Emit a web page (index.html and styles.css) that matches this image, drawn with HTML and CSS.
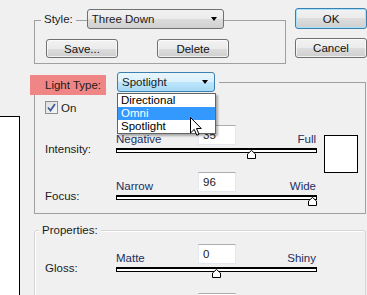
FILE: index.html
```html
<!DOCTYPE html>
<html lang="en">

<head>
  <meta charset="UTF-8">
  <meta name="viewport" content="width=device-width, initial-scale=1.0">
  <title>Lighting Effects</title>
  <link rel="stylesheet" href="styles.css">
</head>

<body>
  <div class="window">
    <div class="preview"></div>
    <div class="main">
      <div class="top-row">
        <div class="group style-group">
          <div class="style-head">
            <span class="legend">Style:</span>
            <div class="select style-select"><span>Three Down</span><i class="arrow"></i></div>
          </div>
          <div class="style-buttons">
            <button class="btn">Save...</button>
            <button class="btn">Delete</button>
          </div>
        </div>
        <div class="dialog-buttons">
          <button class="btn btn-default">OK</button>
          <button class="btn btn-cancel">Cancel</button>
        </div>
      </div>

      <div class="group light-group">
        <div class="light-head">
          <span class="legend-marked">Light Type:</span>
          <div class="select select-open">
            <span>Spotlight</span><i class="arrow"></i>
            <ul class="dropdown">
              <li>Directional</li>
              <li class="hover">Omni</li>
              <li>Spotlight</li>
            </ul>
            <svg class="cursor" width="12" height="19" viewBox="0 0 12 19">
              <path d="M0.5 0.5 L0.5 16 L4.2 12.4 L6.8 18.2 L9 17.2 L6.5 11.5 L11.3 11.5 Z" fill="#fff" stroke="#000" stroke-width="1" stroke-linejoin="round" />
            </svg>
          </div>
        </div>

        <label class="check-row">
          <span class="checkbox">
            <svg width="11" height="11" viewBox="0 0 11 11">
              <path d="M2 5.5 L4.5 8.5 L9 2" fill="none" stroke="#3f5c9a" stroke-width="1.8" />
            </svg>
          </span>
          On
        </label>

        <div class="slider-grid">
          <div class="slider-label">Intensity:</div>
          <div class="slider">
            <div class="slider-top">
              <span class="min">Negative</span>
              <span class="field">35</span>
              <span class="max">Full</span>
            </div>
            <div class="track">
              <svg class="thumb" style="left: 67.5%" width="9" height="9" viewBox="0 0 9 9">
                <path d="M4.5 0.5 L8.5 4 L8.5 8.5 L0.5 8.5 L0.5 4 Z" fill="#fff" stroke="#000" />
              </svg>
            </div>
          </div>
          <div class="swatch"></div>

          <div class="slider-label">Focus:</div>
          <div class="slider">
            <div class="slider-top">
              <span class="min">Narrow</span>
              <span class="field">96</span>
              <span class="max">Wide</span>
            </div>
            <div class="track">
              <svg class="thumb" style="left: 98%" width="9" height="9" viewBox="0 0 9 9">
                <path d="M4.5 0.5 L8.5 4 L8.5 8.5 L0.5 8.5 L0.5 4 Z" fill="#fff" stroke="#000" />
              </svg>
            </div>
          </div>
        </div>
      </div>

      <div class="group props-group">
        <div class="props-head">
          <span class="legend">Properties:</span>
        </div>
        <div class="slider-grid props-grid">
          <div class="slider-label">Gloss:</div>
          <div class="slider">
            <div class="slider-top">
              <span class="min">Matte</span>
              <span class="field">0</span>
              <span class="max">Shiny</span>
            </div>
            <div class="track">
              <svg class="thumb" style="left: 50%" width="9" height="9" viewBox="0 0 9 9">
                <path d="M4.5 0.5 L8.5 4 L8.5 8.5 L0.5 8.5 L0.5 4 Z" fill="#fff" stroke="#000" />
              </svg>
            </div>
          </div>

          <div class="slider-label"></div>
          <div class="slider">
            <div class="slider-top">
              <span class="min"></span>
              <span class="field"></span>
              <span class="max"></span>
            </div>
          </div>
        </div>
      </div>
    </div>
  </div>
</body>

</html>
```

FILE: styles.css
```css
body {
  margin: 0;
  width: 367px;
  height: 295px;
  overflow: hidden;
  background-color: #f0f0f0;
  color: #1b1b1b;
  font-family: 'Liberation Sans', Arial, sans-serif;
  font-size: 11.5px;
}

* {
  box-sizing: border-box;
}

.window {
  display: flex;
  align-items: flex-start;
}

/* preview pane, cut off at the left edge */
.preview {
  flex: none;
  width: 20px;
  height: 200px;
  margin-top: 116px;
  background-color: #fff;
  border-top: 1px solid #000;
  border-right: 1px solid #000;
}

.main {
  flex: none;
  width: 333px;
  margin-left: 14px;
}

.top-row {
  display: flex;
  align-items: flex-start;
  gap: 9px;
}

.group {
  border: 1px solid #a0a0a0;
}

.legend {
  background-color: #f0f0f0;
  padding: 0 3px;
  line-height: 14px;
}

/* buttons */
.btn {
  display: block;
  width: 72px;
  height: 19px;
  padding: 0;
  font: inherit;
  color: #111;
  border: 1px solid #707070;
  border-radius: 3px;
  background: linear-gradient(#f2f2f2 0%, #ebebeb 50%, #dddddd 50%, #cfcfcf 100%);
  box-shadow: inset 0 0 0 1px rgba(255, 255, 255, 0.7);
}

.btn-default {
  height: 21px;
  margin-top: 8px;
  border-color: #3c7fb1;
  box-shadow: inset 0 0 0 1px #a6e2fa;
}

.btn-cancel {
  height: 20px;
  margin-top: 9px;
}

/* style group */
.style-group {
  width: 252px;
  height: 44px;
  margin-top: 20px;
}

.style-head {
  display: flex;
  align-items: center;
  height: 20px;
  margin-top: -12px;
}

.style-head .legend {
  margin-left: 6px;
}

.style-buttons {
  display: flex;
  gap: 39px;
  margin-top: 10px;
  padding-left: 11px;
}

/* selects */
.select {
  position: relative;
  display: flex;
  align-items: center;
  height: 20px;
  padding-left: 4px;
  border: 1px solid #707070;
  border-radius: 3px;
  background: linear-gradient(#f2f2f2 0%, #ebebeb 50%, #dddddd 50%, #cfcfcf 100%);
}

.select span {
  flex: 1;
}

.arrow {
  width: 0;
  height: 0;
  margin-right: 6px;
  border-left: 3.5px solid transparent;
  border-right: 3.5px solid transparent;
  border-top: 4px solid #000;
}

.style-select {
  width: 137px;
  margin-left: 11px;
}

/* light type group */
.light-group {
  width: 332px;
  height: 132px;
  margin-top: 18px;
}

.light-head {
  display: flex;
  align-items: flex-start;
  width: max-content;
  margin-top: -11px;
  margin-left: -5px;
  padding-right: 4px;
  background-color: #f0f0f0;
}

.legend-marked {
  width: 76px;
  height: 20px;
  margin-top: 3px;
  padding-left: 15px;
  line-height: 20px;
  background-color: #f08585;
}

.select-open {
  width: 98px;
  margin-left: 11px;
  border-color: #3c7fb1;
  background: linear-gradient(#eaf6fd 0%, #d9f0fc 50%, #bee6fd 50%, #a7d9f5 100%);
}

.dropdown {
  position: absolute;
  z-index: 2;
  top: 20px;
  left: -1px;
  width: 99px;
  margin: 0;
  padding: 0;
  list-style: none;
  background-color: #fff;
  border: 1px solid #646464;
  box-shadow: 2px 2px 2px rgba(0, 0, 0, 0.3);
}

.dropdown li {
  height: 13px;
  padding-left: 3px;
  line-height: 13px;
  color: #000;
}

.dropdown .hover {
  background-color: #3399ff;
  color: #fff;
}

.cursor {
  position: absolute;
  z-index: 3;
  top: 44px;
  left: 72px;
}

.check-row {
  display: flex;
  align-items: center;
  gap: 3px;
  height: 13px;
  margin-top: 6px;
  padding-left: 10px;
}

.checkbox {
  display: flex;
  align-items: center;
  justify-content: center;
  width: 13px;
  height: 13px;
  border: 1px solid #8e8f8f;
  background: linear-gradient(135deg, #dcdcdc, #f8f8f8);
}

/* sliders */
.slider-grid {
  display: grid;
  grid-template-columns: 71px 201px 41px;
  row-gap: 16px;
  margin-top: 11px;
  padding-left: 10px;
}

.slider-label {
  padding-top: 18px;
  line-height: 13px;
}

.slider-top {
  display: grid;
  grid-template-columns: 82px 38px 1fr;
  height: 23px;
}

.min,
.max {
  align-self: end;
  margin-bottom: 2px;
  line-height: 13px;
  color: #1c2f5e;
}

.max {
  justify-self: end;
  margin-right: 1px;
}

.field {
  height: 20px;
  padding-left: 4px;
  line-height: 18px;
  background-color: #fff;
  border: 1px solid #e3e9ef;
  border-top-color: #abadb3;
}

.track {
  position: relative;
  height: 5px;
  background-color: #fff;
  border: 1px solid #000;
  border-top-width: 2px;
}

.thumb {
  position: absolute;
  top: 0;
  margin-left: -4.5px;
}

.swatch {
  grid-column: 3;
  grid-row: 1 / span 2;
  width: 34px;
  height: 38px;
  margin-top: 10px;
  margin-left: 7px;
  background-color: #fff;
  border: 1px solid #000;
}

/* properties group */
.props-group {
  width: 332px;
  height: 120px;
  margin-top: 16px;
  border-color: #d5d5d5;
  border-radius: 3px;
  box-shadow: inset 1px 1px 0 #fff;
}

.props-head {
  margin-top: -8px;
  padding-left: 4px;
  line-height: 14px;
}

.props-grid {
  grid-template-columns: 71px 201px;
  row-gap: 18px;
  margin-top: 7px;
}
```
